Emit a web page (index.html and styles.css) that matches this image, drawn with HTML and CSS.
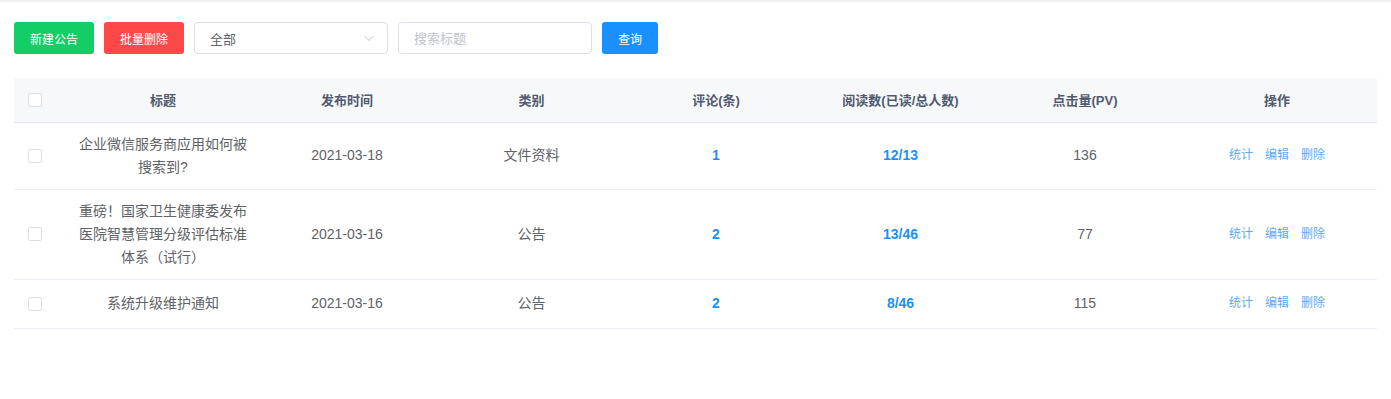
FILE: index.html
```html
<!DOCTYPE html>
<html lang="zh-CN">

<head>
    <meta charset="UTF-8">
    <meta name="viewport" content="width=device-width, initial-scale=1.0">
    <title>公告管理</title>
    <link rel="stylesheet" href="styles.css">
</head>

<body>
    <div class="page">
        <!--* toolbar -->
        <div class="toolbar">
            <button class="btn btn-success">新建公告</button>
            <button class="btn btn-danger">批量删除</button>
            <div class="select">
                <span>全部</span>
                <svg class="arrow" width="12" height="12" viewBox="0 0 12 12">
                    <path d="M1.5 4 L6 8.5 L10.5 4" fill="none" stroke="currentColor" stroke-width="1" />
                </svg>
            </div>
            <div class="search">
                <input type="text" placeholder="搜索标题">
            </div>
            <button class="btn btn-primary">查询</button>
        </div>

        <!--* table -->
        <table class="notice-table">
            <colgroup>
                <col style="width: 57px">
                <col style="width: 184px">
                <col style="width: 184px">
                <col style="width: 185px">
                <col style="width: 184px">
                <col style="width: 185px">
                <col style="width: 184px">
                <col>
            </colgroup>
            <thead>
                <tr>
                    <th class="check-cell"><span class="checkbox"></span></th>
                    <th>标题</th>
                    <th>发布时间</th>
                    <th>类别</th>
                    <th>评论(条)</th>
                    <th>阅读数(已读/总人数)</th>
                    <th>点击量(PV)</th>
                    <th>操作</th>
                </tr>
            </thead>
            <tbody>
                <tr>
                    <td class="check-cell"><span class="checkbox"></span></td>
                    <td class="title-cell">企业微信服务商应用如何被搜索到?</td>
                    <td>2021-03-18</td>
                    <td>文件资料</td>
                    <td class="num">1</td>
                    <td class="num">12/13</td>
                    <td>136</td>
                    <td>
                        <div class="ops"><a>统计</a><a>编辑</a><a>删除</a></div>
                    </td>
                </tr>
                <tr>
                    <td class="check-cell"><span class="checkbox"></span></td>
                    <td class="title-cell">重磅！国家卫生健康委发布医院智慧管理分级评估标准体系（试行）</td>
                    <td>2021-03-16</td>
                    <td>公告</td>
                    <td class="num">2</td>
                    <td class="num">13/46</td>
                    <td>77</td>
                    <td>
                        <div class="ops"><a>统计</a><a>编辑</a><a>删除</a></div>
                    </td>
                </tr>
                <tr>
                    <td class="check-cell"><span class="checkbox"></span></td>
                    <td class="title-cell">系统升级维护通知</td>
                    <td>2021-03-16</td>
                    <td>公告</td>
                    <td class="num">2</td>
                    <td class="num">8/46</td>
                    <td>115</td>
                    <td>
                        <div class="ops"><a>统计</a><a>编辑</a><a>删除</a></div>
                    </td>
                </tr>
            </tbody>
        </table>
    </div>
</body>

</html>
```

FILE: styles.css
```css
body {
    margin: 0;
    font-family: "Liberation Sans", "Noto Sans CJK SC", sans-serif;
    color: #606266;
    background: #fff;
}

.page {
    border-top: 2px solid #f0f1f3;
    padding: 20px 14px;
}

.toolbar {
    display: flex;
    align-items: center;
    gap: 10px;
    margin-bottom: 24px;
}

.btn {
    height: 32px;
    padding: 0 15px;
    font-family: inherit;
    font-size: 12px;
    color: #fff;
    border: none;
    border-radius: 3px;
    cursor: pointer;
}

.btn-success {
    width: 80px;
    background-color: #13ce66;
}

.btn-danger {
    width: 80px;
    background-color: #ff4949;
}

.btn-primary {
    width: 56px;
    background-color: #1890ff;
}

.select {
    box-sizing: border-box;
    width: 194px;
    height: 32px;
    padding: 0 10px 0 15px;
    border: 1px solid #dcdfe6;
    border-radius: 4px;
    display: flex;
    align-items: center;
    justify-content: space-between;
    font-size: 13px;
    color: #606266;
}

.select .arrow {
    color: #c0c4cc;
    margin-right: 2px;
}

.search input {
    box-sizing: border-box;
    width: 194px;
    height: 32px;
    padding: 0 15px;
    border: 1px solid #dcdfe6;
    border-radius: 4px;
    font-family: inherit;
    font-size: 13px;
    outline: none;
}

.search input::placeholder {
    color: #c0c4cc;
}

.notice-table {
    width: 100%;
    table-layout: fixed;
    border-collapse: collapse;
    font-size: 14px;
}

.notice-table th {
    height: 44px;
    padding: 0 10px;
    box-sizing: border-box;
    background-color: #f7f8fa;
    color: #515a6e;
    font-size: 13px;
    font-weight: 600;
    text-align: center;
    border-bottom: 1px solid #e4e7ed;
}

.notice-table td {
    padding: 10px 8px;
    line-height: 23px;
    text-align: center;
    vertical-align: middle;
    border-bottom: 1px solid #ebeef5;
}

.notice-table .check-cell {
    text-align: left;
    padding: 0 0 0 14px;
}

.checkbox {
    display: block;
    box-sizing: border-box;
    width: 14px;
    height: 14px;
    border: 1px solid #dcdfe6;
    border-radius: 2px;
    background: #fff;
}

.notice-table td.num {
    color: #1890ff;
    font-weight: bold;
}

.ops {
    display: flex;
    justify-content: center;
    align-items: center;
    gap: 12px;
    height: 28px;
}

.ops a {
    font-size: 12px;
    color: #5ea8f7;
    cursor: pointer;
}
```
